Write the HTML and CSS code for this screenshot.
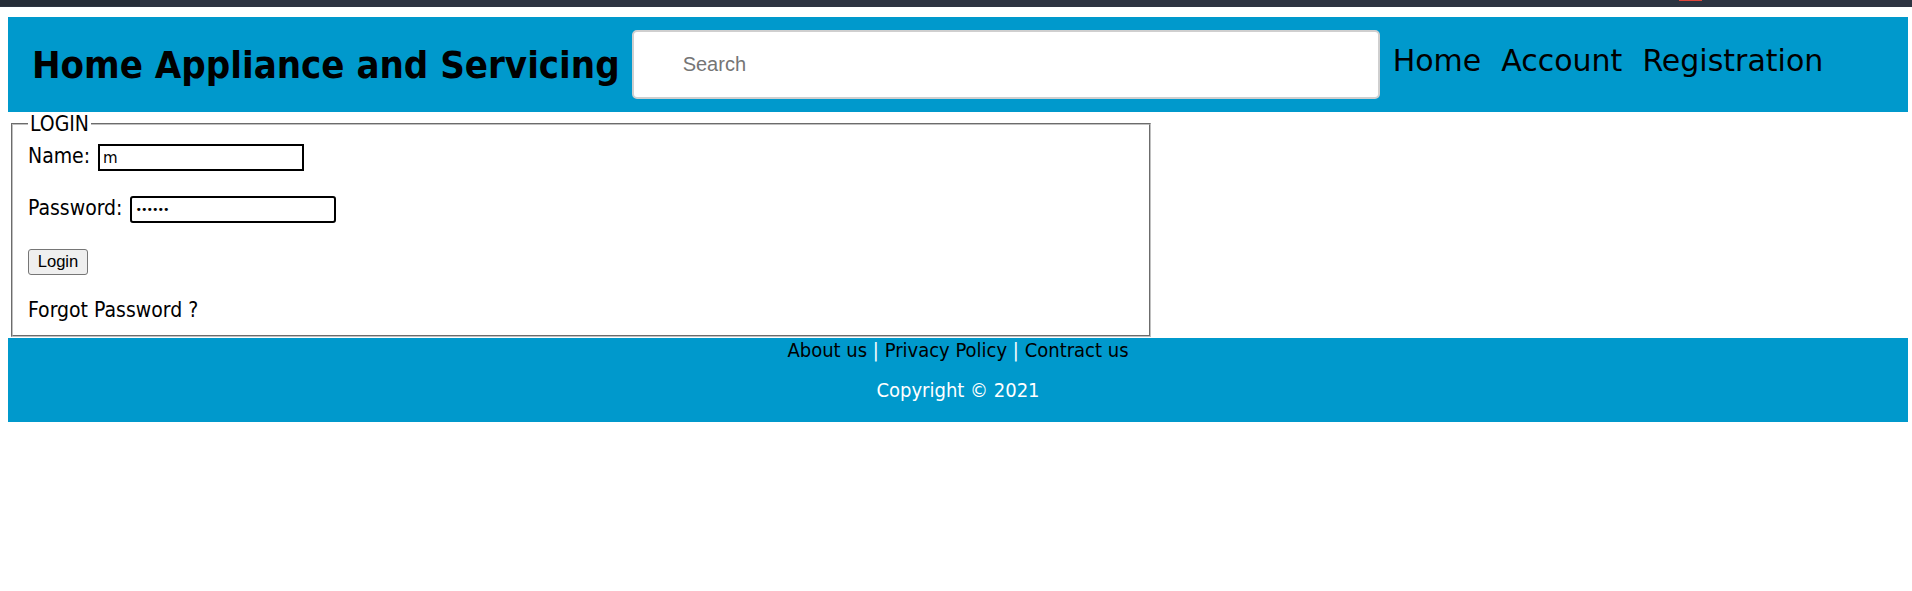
FILE: index.html
```html
<!DOCTYPE html>
<html lang="en">
<head>
<meta charset="utf-8">
<title>Home Appliance and Servicing - Login</title>
<link rel="stylesheet" href="styles.css">
</head>
<body>
<div class="chrome"><span class="chrome-left"></span><span class="chrome-red"></span></div>
<div class="page">
  <header class="topbar">
    <h1 class="brand">Home Appliance and Servicing</h1>
    <input class="search" type="text" placeholder="Search">
    <nav class="nav">
      <a href="#">Home</a>
      <a href="#">Account</a>
      <a href="#">Registration</a>
    </nav>
  </header>

  <fieldset class="login">
    <legend class="login-legend">LOGIN</legend>
    <div class="row">
      <label class="label" for="name">Name:</label>
      <input class="field field-name" id="name" type="text" value="m">
    </div>
    <div class="row">
      <label class="label" for="pass">Password:</label>
      <input class="field field-pass" id="pass" type="password" value="secret">
    </div>
    <div class="row">
      <button class="btn" type="button">Login</button>
    </div>
    <div class="row">
      <span class="forgot">Forgot Password ?</span>
    </div>
  </fieldset>

  <footer class="footer">
    <div class="links"><a href="#">About us</a> <span class="sep">|</span> <a href="#">Privacy Policy</a> <span class="sep">|</span> <a href="#">Contract us</a></div>
    <div class="copy">Copyright © 2021</div>
  </footer>
</div>
</body>
</html>
```
FILE: styles.css
```css
html, body {
  margin: 0;
  padding: 0;
  background: #ffffff;
}

body {
  font-family: "DejaVu Sans Condensed", "DejaVu Sans", sans-serif;
  font-stretch: condensed;
  font-size: 21px;
  color: #000;
}

.chrome {
  height: 7px;
  background: #2d3441;
  display: flex;
  position: relative;
}

.chrome-left {
  width: 140px;
  height: 6px;
  background: #262c37;
}

.chrome-red {
  position: absolute;
  left: 1679px;
  top: 0;
  width: 23px;
  height: 1px;
  background: #e0453a;
}

.page {
  padding: 10px 4px 0 8px;
}

.topbar {
  background: #0099cc;
  display: flex;
  align-items: center;
  padding: 13px 0 13px 24px;
}

.brand {
  margin: 0;
  font-size: 38px;
  font-weight: bold;
  line-height: normal;
  white-space: nowrap;
}

.search {
  box-sizing: border-box;
  width: 748px;
  height: 69px;
  margin-left: 12px;
  padding: 0 0 0 49px;
  border: 2px solid #cfcfcf;
  border-radius: 5px;
  background: #fff;
  font-family: "Liberation Sans", Arial, sans-serif;
  font-stretch: normal;
  font-size: 20px;
  color: #333;
  outline: none;
}

.search::placeholder {
  color: #757575;
}

.nav {
  display: flex;
  gap: 20px;
  margin-left: 13px;
  margin-bottom: 8px;
  font-family: "DejaVu Sans", sans-serif;
  font-stretch: normal;
  font-size: 30px;
}

.nav a {
  color: #000;
  text-decoration: none;
}

.login {
  box-sizing: border-box;
  width: 1140px;
  margin: 0 0 0 3px;
  padding: 8px 15px 8px 15px;
  border: 2px groove #c0c0c0;
  display: flex;
  flex-direction: column;
  gap: 25px;
}

.login-legend {
  padding: 0 2px;
  line-height: normal;
}

.row {
  height: 27px;
  display: flex;
  align-items: center;
  gap: 8px;
}

.label {
  margin-bottom: 3px;
}

.field {
  box-sizing: border-box;
  width: 206px;
  height: 27px;
  margin: 0;
  padding: 0 3px;
  border: 2px solid #000;
  background: #fff;
  font-family: "DejaVu Sans", sans-serif;
  font-stretch: normal;
  font-size: 15px;
  color: #000;
  outline: none;
}

.field-name {
  border-radius: 0;
}

.field-pass {
  border-radius: 3px;
  font-size: 11px;
  letter-spacing: -1px;
}

.btn {
  box-sizing: border-box;
  height: 26px;
  width: 60px;
  padding: 0;
  border: 1px solid #767676;
  border-radius: 3px;
  background: #efefef;
  font-family: "Liberation Sans", Arial, sans-serif;
  font-stretch: normal;
  font-size: 16.6px;
  color: #000;
}

.forgot {
  line-height: normal;
  margin-bottom: 8px;
}

.footer {
  background: #0099cc;
  margin-top: 1px;
  padding: 0 0 20px;
  text-align: center;
  font-size: 20px;
}

.links {
  line-height: 24px;
}

.links a {
  color: #000;
  text-decoration: none;
}

.sep {
  color: #fff;
}

.copy {
  margin-top: 16px;
  line-height: 24px;
  color: #fff;
}
```
